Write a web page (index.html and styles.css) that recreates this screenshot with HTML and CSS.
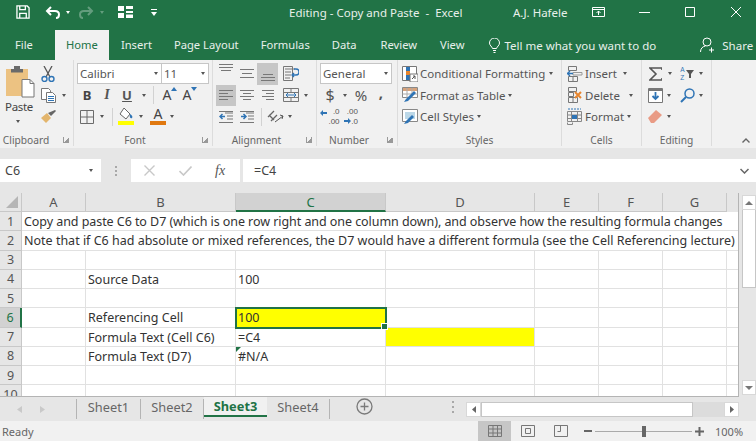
FILE: index.html
```html
<!DOCTYPE html>
<html lang="en">
<head>
  <meta charset="UTF-8" />
  <title>Editing - Copy and Paste - Excel</title>
  <link rel="stylesheet" href="styles.css">
</head>
<body>

<header class="titlebar">
  <div class="qat">
    <svg class="q-save" width="14" height="14" viewBox="0 0 15 15" fill="none" stroke="#fff" stroke-width="1.4"><path d="M1 1h11l2 2v11H1z"/><path d="M4 1v4h6V1M4 14V9h7v5"/></svg>
    <svg class="q-undo" width="15" height="13" viewBox="0 0 15 13" fill="none" stroke="#fff" stroke-width="2"><path d="M6 1 2 5l4 4M2 5h8c3 0 4 1.5 4 3.5S13 12 11 12"/></svg>
    <span class="q-car"></span>
    <svg class="q-redo" width="15" height="13" viewBox="0 0 15 13" fill="none" stroke="#fff" stroke-width="2" opacity=".3"><path d="M9 1l4 4-4 4M13 5H5C2 5 1 6.5 1 8.5S2 12 4 12"/></svg>
    <span class="q-car dim"></span>
    <svg class="q-grid" width="15" height="12" viewBox="0 0 15 12" fill="#fff"><path d="M0 0h6v5H0zM8 0h7v3H8zM0 7h6v5H0zM8 5h7v2H8zM8 8.5h7V12H8z"/></svg>
    <svg class="q-more" width="6" height="7" viewBox="0 0 6 7" fill="#fff"><path d="M0 0h6v1H0zM0 3h6L3 7z"/></svg>
  </div>
  <div class="doc-title">Editing - Copy and Paste &nbsp;-&nbsp; Excel</div>
  <div class="user">A.J. Hafele</div>
  <svg class="ribbon-mode" width="13" height="10" viewBox="0 0 13 10" fill="none" stroke="#fff"><path d="M.5.5h12v9H.5zM.5 2.500h12M6.5 8V4M4.500 6l2-2 2 2"/></svg>
  <svg class="win-min" width="11" height="1" viewBox="0 0 11 1"><path d="M0 0h11v1H0z" fill="#fff"/></svg>
  <svg class="win-max" width="10" height="10" viewBox="0 0 10 10" fill="none" stroke="#fff"><path d="M.5.5h9v9h-9z"/></svg>
  <svg class="win-close" width="10" height="10" viewBox="0 0 10 10" fill="none" stroke="#fff"><path d="M0 0l10 10M10 0 0 10"/></svg>
</header>

<nav class="tabs">
  <span class="tab tab-file">File</span>
  <span class="tab active">Home</span>
  <span class="tab">Insert</span>
  <span class="tab">Page Layout</span>
  <span class="tab">Formulas</span>
  <span class="tab">Data</span>
  <span class="tab tab-review">Review</span>
  <span class="tab">View</span>
  <svg class="bulb" width="11" height="15" viewBox="0 0 11 15" fill="none" stroke="#fff"><path d="M3.5 10.5C3 8.5.5 7.5.5 5a5 5 0 0 1 10 0c0 2.500-2.500 3.500-3 5.500zM4 12.5h3M4.5 14.5h2"/></svg>
  <span class="tell">Tell me what you want to do</span>
  <svg class="share-ic" width="15" height="16" viewBox="0 0 15 16" fill="none" stroke="#fff"><circle cx="7" cy="5" r="4"/><path d="M.5 15c0-3.500 2-5.500 5-6M11.5 10.5v5M9 13h5"/></svg>
  <span class="share">Share</span>
</nav>

<section class="ribbon">

  <div class="group g-clip">
    <div class="clip-body">
      <div class="paste">
        <svg width="29" height="33" viewBox="0 0 29 33" class="paste-ic"><path d="M0 4h22v27H0z" fill="#ecc282"/><path d="M5 4h12v3.500H5zM8 1h6v3H8z" fill="#6a6a6a"/><path d="M16 14.500h8l4 4V32H16z" fill="#fff" stroke="#777"/><path d="M24 14.500v4h4" fill="none" stroke="#777"/></svg>
        <span class="paste-label">Paste</span>
        <span class="car"></span>
      </div>
      <div class="clip-tools">
        <div class="rrow">
          <svg width="14" height="16" viewBox="0 0 14 16" fill="none"><path d="M3 0l6 11M11 0 5 11" stroke="#555" stroke-width="1.3"/><circle cx="3.5" cy="13" r="2.5" stroke="#2f74b5" stroke-width="1.4"/><circle cx="10.5" cy="13" r="2.5" stroke="#2f74b5" stroke-width="1.4"/></svg>
        </div>
        <div class="rrow">
          <svg width="15" height="15" viewBox="0 0 15 15" fill="#fff" stroke="#777"><path d="M.5.5h7l2 2v9h-9z"/><path d="M5.5 4.500h6l3 3v7h-9z"/><path d="M7 8.500h6M7 10.500h6M7 12.500h6" stroke="#2f74b5"/></svg>
          <span class="car ml4"></span>
        </div>
        <div class="rrow">
          <svg width="15" height="13" viewBox="0 0 15 13"><path d="M0 8l6-5 4 5-5 5z" fill="#e3b56c"/><path d="M7 3l3 3 5-5-1-1z" fill="#666"/></svg>
        </div>
      </div>
    </div>
    <div class="gfoot foot-clip"><span class="gname">Clipboard</span><span class="launch"></span></div>
  </div>

  <div class="group g-font">
    <div class="rrow">
      <div class="field f-name"><span>Calibri</span><span class="car"></span></div>
      <div class="field f-size"><span>11</span><span class="car"></span></div>
    </div>
    <div class="rrow pad3">
      <span class="t fb">B</span>
      <span class="t fi">I</span>
      <span class="t fu">U</span>
      <span class="car ml3"></span>
      <span class="sep sep-a"></span>
      <span class="t fa">A<svg width="6" height="4" viewBox="0 0 6 4" class="up"><path d="M0 4l3-4 3 4z" fill="#2f74b5"/></svg></span>
      <span class="t fa">A<svg width="6" height="4" viewBox="0 0 6 4" class="up"><path d="M0 0l3 4 3-4z" fill="#2f74b5"/></svg></span>
    </div>
    <div class="rrow pad3">
      <span class="t"><svg width="14" height="14" viewBox="0 0 14 14" fill="none" stroke="#6b6b6b"><path d="M.5.5h13v13H.5zM7 .5v13M.5 7h13"/></svg></span>
      <span class="car ml1"></span>
      <span class="sep sep-b"></span>
      <span class="t col">
        <svg width="16" height="12" viewBox="0 0 16 12"><path d="M6 0l6 6-4 5-6-5z" fill="#fff" stroke="#666"/><path d="M12 6c2 1 3 3 2 4s-3 0-2-4z" fill="#2f74b5"/></svg>
        <i class="bar yellow"></i>
      </span>
      <span class="car ml1"></span>
      <span class="t col ml3"><b class="a-col">A</b><i class="bar orange"></i></span>
      <span class="car"></span>
    </div>
    <div class="gfoot"><span class="gname">Font</span><span class="launch"></span></div>
  </div>

  <div class="group g-align">
    <div class="rrow pad3">
      <span class="t"><svg width="14" height="12" viewBox="0 0 14 12" class="al-top" fill="#777"><path d="M0 0h14v1H0zM0 3h14v1H0zM2 6h10v1H2z"/></svg></span>
      <span class="t ml1"><svg width="14" height="10" viewBox="0 0 14 10" fill="#777"><path d="M0 0h14v1H0zM2 4h10v1H2zM0 8h14v1H0z"/></svg></span>
      <span class="t sel w21"><svg width="14" height="14" viewBox="0 0 14 14" class="al-bot" fill="#777"><path d="M2 6h10v1H2zM0 9h14v1H0zM0 12h14v1H0z"/></svg></span>
      <span class="t ml3"><svg width="16" height="15" viewBox="0 0 16 15" fill="none"><path d="M.5.5h9v14h-9z" stroke="#777"/><path d="M2 3h10M2 6h6M2 9h6M2 12h5" stroke="#777"/><path d="M11 3h2a2 2 0 0 1 0 6h-4M11 7 9 9l2 2" stroke="#2f74b5" stroke-width="1.3"/></svg></span>
    </div>
    <div class="rrow pad3">
      <span class="t sel"><svg width="14" height="10" viewBox="0 0 14 10" fill="#777"><path d="M0 0h14v1H0zM0 3h9v1H0zM0 6h14v1H0zM0 9h9v1H0z"/></svg></span>
      <span class="t ml1"><svg width="14" height="10" viewBox="0 0 14 10" fill="#777"><path d="M0 0h14v1H0zM3 3h8v1H3zM0 6h14v1H0zM3 9h8v1H3z"/></svg></span>
      <span class="t ml1"><svg width="12" height="10" viewBox="0 0 12 10" fill="#777"><path d="M0 0h12v1H0zM4 3h8v1H4zM0 6h12v1H0zM4 9h8v1H4z"/></svg></span>
      <span class="t ml3"><svg width="16" height="14" viewBox="0 0 16 14" fill="none"><path d="M.5.5h15v13H.5zM.5 4.500h15M.5 9.500h15M8 .5v4M8 9.500v4" stroke="#777"/><path d="M3 7h10M5 5 3 7l2 2M11 5l2 2-2 2" stroke="#2f74b5"/></svg></span>
      <span class="car ml1"></span>
    </div>
    <div class="rrow pad3">
      <span class="t"><svg width="14" height="12" viewBox="0 0 14 12" fill="none"><path d="M6 2h8M8 5h6M8 8h6M0 11.500h14M0 .5h14" stroke="#777"/><path d="M6 5.500H1M3.500 3 1 5.500 3.500 8" stroke="#2f74b5" stroke-width="1.5"/></svg></span>
      <span class="t ml1"><svg width="14" height="12" viewBox="0 0 14 12" fill="none"><path d="M6 2h8M8 5h6M8 8h6M0 11.500h14M0 .5h14" stroke="#777"/><path d="M1 5.500h5M3.500 3 6 5.500 3.500 8" stroke="#2f74b5" stroke-width="1.5"/></svg></span>
      <span class="sep sep-c"></span>
      <span class="t"><svg width="18" height="15" viewBox="0 0 18 15" fill="none"><path d="M1 8l6-6M4 12l6-6M2 6l5 5" stroke="#666" stroke-width="1.3"/><path d="M8 13l8-6M13 6l3 1-1 3" stroke="#555"/></svg></span>
      <span class="car"></span>
    </div>
    <div class="gfoot"><span class="gname">Alignment</span><span class="launch"></span></div>
  </div>

  <div class="group g-num">
    <div class="rrow">
      <div class="field f-fmt"><span>General</span><span class="car"></span></div>
    </div>
    <div class="rrow pad3">
      <span class="t sym dollar">$</span>
      <span class="car ml1"></span>
      <span class="t sym ml2">%</span>
      <span class="t sym comma">,</span>
    </div>
    <div class="rrow pad3">
      <span class="t dec"><svg width="7" height="6" viewBox="0 0 7 6" class="dec-arrow"><path d="M3 0v2h4v2H3v2L0 3z" fill="#2f74b5"/></svg><span>.0<br>.00</span></span>
      <span class="t dec ml1"><span>.00<br><svg width="7" height="6" viewBox="0 0 7 6"><path d="M4 0v2H0v2h4v2l3-3z" fill="#2f74b5"/></svg>.0</span></span>
    </div>
    <div class="gfoot"><span class="gname">Number</span><span class="launch"></span></div>
  </div>

  <div class="group g-styles">
    <div class="rrow pad4">
      <svg class="lic" width="16" height="16" viewBox="0 0 16 16"><path d="M.5.5h14v14H.5z" fill="#fff" stroke="#777"/><path d="M4 1h4v4H4z" fill="#2f74b5"/><path d="M4 5h4v4H4z" fill="#e8862e"/><path d="M4 9h4v5H4z" fill="#2f74b5"/><path d="M8 8h8v8H8z" fill="#fff" stroke="#777"/><path d="M10 13l3-3M13 13v-3h-2" stroke="#555" fill="none"/></svg>
      <span class="lbl">Conditional Formatting</span><span class="car ml2"></span>
    </div>
    <div class="rrow pad4">
      <svg class="lic" width="16" height="16" viewBox="0 0 16 16"><path d="M.5.5h15v10H.5z" fill="#fff" stroke="#888"/><path d="M1 1h14v3H1z" fill="#d8a27a"/><path d="M.5 7h15M5 1v10M10 1v10" stroke="#aaa"/><path d="M2 15l4-1 8-8-2-2-8 8z" fill="#2f74b5"/></svg>
      <span class="lbl">Format as Table</span><span class="car ml1"></span>
    </div>
    <div class="rrow pad4">
      <svg class="lic" width="16" height="16" viewBox="0 0 16 16"><path d="M.5.5h15v12H.5z" fill="#fff" stroke="#888"/><path d="M3 3h10v7H3z" fill="#bcd8e8"/><path d="M2 15l4-1 6-6-2-2-6 6z" fill="#2f74b5"/></svg>
      <span class="lbl">Cell Styles</span><span class="car ml1"></span>
    </div>
    <div class="gfoot"><span class="gname">Styles</span></div>
  </div>

  <div class="group g-cells">
    <div class="rrow pad5">
      <svg class="lic" width="16" height="16" viewBox="0 0 16 16" fill="none"><path d="M1.5.5h8v4h-8zM1.5 10.500h9v5h-9zM6 10.500v5" stroke="#777"/><path d="M6 6.500h9v2.500H6z" stroke="#999"/><path d="M0 7.500h6M3 5 .5 7.500 3 10" stroke="#2f74b5" stroke-width="1.3"/></svg>
      <span class="lbl">Insert</span><span class="car m-ins"></span>
    </div>
    <div class="rrow pad5">
      <svg class="lic" width="16" height="16" viewBox="0 0 16 16" fill="none"><path d="M1.5.5h8v4h-8zM1.5 5.500h5v4h-5zM1.5 10.500h9v5h-9zM6 10.500v5" stroke="#777"/><path d="M8 5l6 6M14 5l-6 6" stroke="#e8862e" stroke-width="2"/></svg>
      <span class="lbl">Delete</span><span class="car m-del"></span>
    </div>
    <div class="rrow pad5">
      <svg class="lic" width="16" height="17" viewBox="0 0 16 17" fill="none"><path d="M.5 3.500h14v10H.5zM4.500 3.500v10M10.500 3.500v10M.5 7h14M.5 10.500h14" stroke="#888"/><path d="M5 7h5v4H5z" fill="#2f74b5"/><path d="M1 1h13" stroke="#2f74b5" stroke-dasharray="2 1"/><path d="M.5 14.500v2h5v-2" stroke="#888"/></svg>
      <span class="lbl">Format</span><span class="car ml1"></span>
    </div>
    <div class="gfoot"><span class="gname">Cells</span></div>
  </div>

  <div class="group g-edit">
    <div class="rrow pad3">
      <span class="t"><svg width="13" height="14" viewBox="0 0 13 14" fill="none"><path d="M13 3V1H1l6 6-6 6h12v-2" stroke="#555" stroke-width="1.6"/></svg></span>
      <span class="car ml1"></span>
      <span class="t ml3 sortic"><span class="az">A<br>Z</span><svg width="8" height="8" viewBox="0 0 8 8"><path d="M0 0h8L5 4v4H3V4z" fill="#555"/></svg></span>
      <span class="car"></span>
    </div>
    <div class="rrow pad3">
      <span class="t"><svg width="15" height="15" viewBox="0 0 15 15" fill="none"><path d="M.5.5h14v14H.5z" fill="#fff" stroke="#777"/><path d="M1 2h13" stroke="#777" stroke-width="2"/><path d="M7.5 4v6M4.500 8l3 3 3-3" stroke="#2f74b5" stroke-width="1.8"/></svg></span>
      <span class="car"></span>
      <span class="t ml4"><svg width="15" height="15" viewBox="0 0 15 15" fill="none"><circle cx="9.500" cy="5.500" r="4.500" stroke="#2f74b5" stroke-width="1.5"/><path d="M6 9l-5 5" stroke="#2f74b5" stroke-width="2"/></svg></span>
      <span class="car"></span>
    </div>
    <div class="rrow pad3">
      <span class="t"><svg width="15" height="13" viewBox="0 0 15 13"><path d="M0 8l8-8 6 5-8 8H3z" fill="#e99b85"/></svg></span>
      <span class="car"></span>
    </div>
    <div class="gfoot"><span class="gname">Editing</span></div>
  </div>

  <div class="collapse">
    <svg width="8" height="5" viewBox="0 0 8 5" fill="none" stroke="#666" stroke-width="1.4"><path d="M.5 4.500 4 1l3.500 3.500"/></svg>
  </div>
</section>

<section class="fbar">
  <div class="namebox"><span>C6</span><span class="car"></span></div>
  <div class="grip"><i></i><i></i><i></i></div>
  <div class="fbtns">
    <svg width="11" height="11" viewBox="0 0 11 11" fill="none" stroke="#c8c8c8" stroke-width="1.4"><path d="M.5.5l10 10M10.5.5l-10 10"/></svg>
    <svg width="13" height="10" viewBox="0 0 13 10" fill="none" stroke="#c8c8c8" stroke-width="1.6"><path d="M.5 5l4 4 8-8.500"/></svg>
    <span class="fx">fx</span>
  </div>
  <div class="finput"><span>=C4</span>
    <svg width="9" height="6" viewBox="0 0 9 6" fill="none" stroke="#666" stroke-width="1.5"><path d="M.5 1 4.500 5l4-4"/></svg>
  </div>
</section>

<section class="work">
  <div class="grid">
    <div class="hd corner"><svg width="12" height="12" viewBox="0 0 12 12"><path d="M12 0v12H0z" fill="#b5b5b5"/></svg></div>
    <div class="hd">A</div><div class="hd">B</div><div class="hd hd-sel">C</div><div class="hd">D</div><div class="hd">E</div><div class="hd">F</div><div class="hd">G</div><div class="hd-none"></div>

    <div class="rh">1</div><div class="c span-all tight">Copy and paste C6 to D7 (which is one row right and one column down), and observe how the resulting formula changes</div>
    <div class="rh">2</div><div class="c span-all">Note that if C6 had absolute or mixed references, the D7 would have a different formula (see the Cell Referencing lecture)</div>
    <div class="rh">3</div><div class="c"></div><div class="c"></div><div class="c"></div><div class="c"></div><div class="c"></div><div class="c"></div><div class="c"></div><div class="c"></div>
    <div class="rh">4</div><div class="c"></div><div class="c">Source Data</div><div class="c">100</div><div class="c"></div><div class="c"></div><div class="c"></div><div class="c"></div><div class="c"></div>
    <div class="rh">5</div><div class="c"></div><div class="c"></div><div class="c"></div><div class="c"></div><div class="c"></div><div class="c"></div><div class="c"></div><div class="c"></div>
    <div class="rh rh-sel">6</div><div class="c"></div><div class="c">Referencing Cell</div><div class="c active-cell">100</div><div class="c"></div><div class="c"></div><div class="c"></div><div class="c"></div><div class="c"></div>
    <div class="rh">7</div><div class="c"></div><div class="c">Formula Text (Cell C6)</div><div class="c">=C4</div><div class="c fill-yellow"></div><div class="c"></div><div class="c"></div><div class="c"></div><div class="c"></div>
    <div class="rh">8</div><div class="c"></div><div class="c">Formula Text (D7)</div><div class="c has-flag">#N/A</div><div class="c"></div><div class="c"></div><div class="c"></div><div class="c"></div><div class="c"></div>
    <div class="rh">9</div><div class="c"></div><div class="c"></div><div class="c"></div><div class="c"></div><div class="c"></div><div class="c"></div><div class="c"></div><div class="c"></div>
    <div class="rh">10</div><div class="c"></div><div class="c"></div><div class="c"></div><div class="c"></div><div class="c"></div><div class="c"></div><div class="c"></div><div class="c"></div>
  </div>
  <div class="vscroll">
    <div class="sb-btn"><svg width="8" height="4" viewBox="0 0 8 4"><path d="M0 4l4-4 4 4z" fill="#777"/></svg></div>
    <div class="vthumb"></div>
    <div class="sb-btn sb-down"><svg width="8" height="4" viewBox="0 0 8 4"><path d="M0 0l4 4 4-4z" fill="#777"/></svg></div>
  </div>
</section>

<section class="sheetbar">
  <div class="nav-arrows">
    <svg width="5" height="7" viewBox="0 0 5 7"><path d="M5 0v7L0 3.500z" fill="#c9c9c9"/></svg>
    <svg width="5" height="7" viewBox="0 0 5 7"><path d="M0 0v7l5-3.500z" fill="#c9c9c9"/></svg>
  </div>
  <span class="stab stab-1">Sheet1</span>
  <span class="stab">Sheet2</span>
  <span class="stab stab-on">Sheet3</span>
  <span class="stab">Sheet4</span>
  <svg class="addsheet" width="17" height="17" viewBox="0 0 17 17" fill="none" stroke="#7a7a7a" stroke-width="1.3"><circle cx="8.500" cy="8.500" r="7.500"/><path d="M8.500 4.500v8M4.500 8.500h8"/></svg>
  <div class="hgrip"><i></i><i></i><i></i></div>
  <div class="hscroll">
    <div class="hbtn"><svg width="4" height="7" viewBox="0 0 4 7"><path d="M4 0v7L0 3.500z" fill="#666"/></svg></div>
    <div class="hthumb"></div>
    <div class="htrack"></div>
    <div class="hbtn"><svg width="4" height="7" viewBox="0 0 4 7"><path d="M0 0v7l4-3.500z" fill="#666"/></svg></div>
  </div>
</section>

<footer class="status">
  <span class="ready">Ready</span>
  <div class="views">
    <div class="view view-on"><svg width="14" height="12" viewBox="0 0 14 12" fill="none" stroke="#777"><path d="M.5.5h13v11H.5zM.5 4h13M.5 8h13M5 .5v11M9.500.5v11"/></svg></div>
    <div class="view"><svg width="14" height="12" viewBox="0 0 14 12" fill="none" stroke="#777"><path d="M.5.5h13v11H.5zM4.500 3.500h5v5h-5z"/></svg></div>
    <div class="view"><svg width="14" height="12" viewBox="0 0 14 12" fill="none" stroke="#777"><path d="M.5.5h13v11H.5zM6.500.5v6h-3"/></svg></div>
  </div>
  <div class="zoom">
    <svg width="8" height="2" viewBox="0 0 8 2"><path d="M0 0h8v2H0z" fill="#666"/></svg>
    <div class="zline"><i></i></div>
    <svg width="9" height="9" viewBox="0 0 9 9"><path d="M3.500 0h2v3.500H9v2H5.500V9h-2V5.500H0v-2h3.500z" fill="#666"/></svg>
  </div>
  <span class="zoompct">100%</span>
</footer>

</body>
</html>
```

FILE: styles.css
```css
* {
  box-sizing: border-box;
}
html, body {
  margin: 0;
  height: 100%;
}
body {
  width: 756px;
  height: 441px;
  overflow: hidden;
  display: flex;
  flex-direction: column;
  background: #e6e6e6;
  font-family: "Noto Sans", "Open Sans", sans-serif;
  font-size: 11.5px;
  color: #444;
}
svg {
  display: block;
  flex: none;
}

/* title bar */
.titlebar {
  height: 30px;
  flex: none;
  padding-bottom: 6px;
  background: #217346;
  color: #e8f0eb;
  display: flex;
  align-items: center;
}
.qat {
  width: 289px;
  display: flex;
  align-items: center;
  padding-left: 16px;
}
.q-undo { margin-left: 15px; }
.q-car {
  width: 0;
  height: 0;
  margin-left: 6px;
  border-top: 3px solid #fff;
  border-left: 2.5px solid transparent;
  border-right: 2.5px solid transparent;
}
.q-car.dim { opacity: .3; }
.q-redo { margin-left: 9px; }
.q-grid { margin-left: 14px; }
.q-more { margin-left: 18px; }
.doc-title { width: 224px; white-space: nowrap; }
.user { width: 79px; white-space: nowrap; }
.win-min { margin-left: 34px; }
.win-max { margin-left: 35px; }
.win-close { margin-left: 36px; }

/* tabs */
.tabs {
  height: 30px;
  flex: none;
  background: #217346;
  color: #e8f0eb;
  display: flex;
  align-items: center;
  padding-left: 4px;
  font-size: 11.2px;
}
.tab {
  height: 30px;
  line-height: 30px;
  padding: 0 11px;
  white-space: nowrap;
}
.tab.active {
  background: #f1f1f1;
  color: #217346;
  width: 54px;
  padding: 0;
  text-align: center;
  margin-right: 1px;
}
.tab-file { margin-right: 11px; }
.tab-review { margin-left: 2px; margin-right: 1px; }
.bulb { margin-left: 13px; }
.tell { margin-left: 5px; white-space: nowrap; font-size: 11.5px; }
.share-ic { margin-left: 44px; }
.share { margin-left: 7px; font-size: 11.5px; }

/* ribbon */
.ribbon {
  height: 88px;
  flex: none;
  background: #f1f1f1;
  display: flex;
  color: #444;
}
.group {
  padding-top: 3px;
  border-right: 1px solid #dcdcdc;
  display: flex;
  flex-direction: column;
  height: 86px;
}
.g-clip { width: 74px; }
.g-font { width: 139px; }
.g-align { width: 104px; }
.g-num { width: 81px; }
.g-styles { width: 164px; }
.g-cells { width: 80px; }
.g-edit { width: 70px; }
.collapse {
  flex: 1;
  display: flex;
  justify-content: flex-end;
  align-items: flex-end;
  padding: 0 6px 5px 0;
}
.rrow {
  height: 21.5px;
  display: flex;
  align-items: center;
  white-space: nowrap;
}
.pad3 { padding-left: 3px; }
.pad4 { padding-left: 4px; }
.pad5 { padding-left: 5px; }
.gfoot {
  margin-top: auto;
  height: 16px;
  margin-bottom: -2px;
  display: flex;
  align-items: center;
  color: #666;
  font-size: 10.2px;
}
.gname {
  flex: 1;
  text-align: center;
}
.foot-clip .gname {
  flex: none;
  width: 58px;
  padding-right: 6px;
}
.foot-clip .launch { margin-left: 5px; }
.launch {
  flex: none;
  width: 6px;
  height: 6px;
  margin: 0 4px 0 6px;
  border-left: 1px solid #999;
  border-bottom: 1px solid #999;
  background: linear-gradient(135deg, transparent 50%, #999 50%);
}
.car {
  flex: none;
  width: 8px;
  display: flex;
  justify-content: center;
}
.car::before {
  content: "";
  border-top: 3px solid #555;
  border-left: 2.5px solid transparent;
  border-right: 2.5px solid transparent;
}
.ml1 { margin-left: 1px; }
.ml2 { margin-left: 2px; }
.ml3 { margin-left: 3px; }
.ml4 { margin-left: 4px; }
.m-ins { margin-left: 4px; }
.m-del { margin-left: 7px; }

/* clipboard */
.clip-body {
  display: flex;
  height: 64.5px;
}
.paste {
  width: 40px;
  display: flex;
  flex-direction: column;
  align-items: flex-start;
  padding-left: 6px;
}
.paste-ic { margin-top: 2px; }
.paste-label {
  margin-left: -1px;
  line-height: 17px;
  font-size: 11.5px;
  letter-spacing: -.3px;
}
.paste .car { margin: 5px 0 0 8px; }
.clip-tools { padding-left: 1px; }

/* font group */
.field {
  height: 21px;
  background: #fff;
  border: 1px solid #c6c6c6;
  display: flex;
  align-items: center;
  justify-content: space-between;
  padding: 0 1px 0 2px;
  color: #555;
}
.f-name { width: 84px; margin-left: 3px; border-right: 0; }
.f-size { width: 48px; }
.f-fmt { width: 72px; margin-left: 3px; }
.t {
  flex: none;
  width: 20px;
  height: 21.5px;
  display: flex;
  align-items: center;
  justify-content: center;
}
.w21 { width: 21px; }
.sel { background: #c6c6c6; }
.fb { font-weight: bold; font-size: 13px; color: #444; }
.fi { font-style: italic; font-size: 14px; font-family: "Liberation Serif", serif; font-weight: bold; color: #555; }
.fu { text-decoration: underline; font-size: 13px; font-weight: bold; color: #555; }
.fa { font-size: 14px; align-items: flex-end; padding-bottom: 2px; }
.fa .up { margin: 0 -4px 13px 0; }
.sep {
  width: 1px;
  height: 18px;
  background: #d2d2d2;
}
.sep-a { margin: 0 4px 0 5px; }
.sep-b { margin: 0 3px 0 6px; }
.sep-c { margin: 0 4px 0 4px; }
.col { flex-direction: column; gap: 1px; }
.bar { display: block; width: 16px; height: 4px; }
.yellow { background: #ffff00; }
.orange { background: #e0780f; }
.a-col { font-size: 14px; line-height: 12px; font-weight: normal; color: #444; }

.al-top { margin-top: -8px; }
.al-bot { margin-top: 2px; }

/* number */
.sym { font-size: 15px; color: #555; }
.dollar { font-size: 16px; }
.comma { font-weight: bold; padding-bottom: 6px; }
.dec {
  font-family: "Liberation Sans", sans-serif;
  font-size: 8px;
  line-height: 9.5px;
  color: #555;
  gap: 1px;
}
.dec span { text-align: right; }
.dec-arrow { margin-bottom: 7px; }
.dec svg { display: inline-block; }

/* styles, cells, editing */
.lbl { margin-left: 2px; color: #555; }
.sortic { gap: 1px; }
.az {
  font-family: "Liberation Sans", sans-serif;
  font-size: 6.5px;
  line-height: 7.5px;
  color: #2f74b5;
}

/* formula bar */
.fbar {
  height: 45px;
  flex: none;
  background: #e6e6e6;
  display: flex;
  padding-top: 11px;
  align-items: flex-start;
}
.namebox, .fbtns, .finput {
  height: 23px;
  background: #fff;
  display: flex;
  align-items: center;
  color: #444;
  font-size: 12.5px;
}
.namebox {
  width: 101px;
  justify-content: space-between;
  padding: 0 6px 0 5px;
}
.grip {
  width: 30px;
  height: 23px;
  display: flex;
  flex-direction: column;
  align-items: center;
  justify-content: center;
  gap: 2px;
}
.grip i, .hgrip i {
  width: 2px;
  height: 2px;
  background: #a8a8a8;
}
.fbtns {
  width: 109px;
  padding-left: 13px;
  gap: 24px;
}
.fx {
  margin-left: -1px;
  font-family: "Liberation Serif", serif;
  font-style: italic;
  font-size: 14px;
  color: #555;
}
.finput {
  margin-left: 3px;
  flex: 1;
  justify-content: space-between;
  padding: 0 7px 0 11px;
}

/* worksheet */
.work {
  height: 204px;
  flex: none;
  display: flex;
}
.grid {
  width: 739px;
  height: 204px;
  overflow: hidden;
  display: grid;
  grid-template-columns: 22px 64px 150px 150px 149px 64px 64px 64px 12px;
  grid-template-rows: 19px;
  grid-auto-rows: 19.25px;
  border-right: 1px solid #b4b4b4;
  border-bottom: 1px solid #b4b4b4;
  font-size: 12.5px;
  color: #333;
}
.hd, .rh {
  background: #e6e6e6;
  display: flex;
  align-items: center;
  justify-content: center;
  color: #555;
  border-right: 1px solid #c8c8c8;
  border-bottom: 1px solid #c8c8c8;
}
.hd { font-size: 13px; }
.corner {
  justify-content: flex-end;
  padding-right: 3px;
}
.hd-sel {
  background: #d2d2d2;
  color: #217346;
  border-bottom: 2px solid #217346;
}
.rh-sel {
  background: #d2d2d2;
  color: #217346;
  border-right: 2px solid #217346;
}
.c {
  background: #fff;
  border-right: 1px solid #e1e1e1;
  border-bottom: 1px solid #e1e1e1;
  padding: 1px 0 0 2px;
  display: flex;
  align-items: center;
  white-space: nowrap;
  position: relative;
}
.span-all { grid-column: 2 / -1; }
.tight { letter-spacing: -.06px; }
.fill-yellow { background: #ffff00; }
.active-cell {
  background: #ffff00;
  outline: 2px solid #217346;
  outline-offset: -1px;
  z-index: 1;
}
.active-cell::after {
  content: "";
  position: absolute;
  right: -3px;
  bottom: -3px;
  width: 5px;
  height: 5px;
  background: #217346;
  border: 1px solid #fff;
}
.has-flag::before {
  content: "";
  position: absolute;
  left: 0;
  top: 0;
  border-top: 5px solid #217346;
  border-right: 5px solid transparent;
}
.vscroll {
  flex: 1;
  padding: 2px 0 0 3px;
  display: flex;
  flex-direction: column;
  background: #e6e6e6;
}
.sb-btn {
  height: 15px;
  flex: none;
  background: #fff;
  border: 1px solid #d8d8d8;
  display: flex;
  align-items: center;
  justify-content: center;
}
.vthumb {
  flex: 1;
  margin-bottom: 92px;
  background: #fff;
  border: 1px solid #c6c6c6;
  border-top: 0;
}
.sb-down { margin-bottom: 2px; }

/* sheet tabs */
.sheetbar {
  height: 24px;
  flex: none;
  background: #e6e6e6;
  display: flex;
  align-items: flex-start;
  font-size: 12.8px;
  color: #666;
}
.nav-arrows {
  width: 77px;
  height: 20px;
  padding-left: 17px;
  display: flex;
  align-items: center;
  gap: 18px;
  border-right: 1px solid #b4b4b4;
  margin-top: 2px;
}
.stab {
  height: 20px;
  line-height: 16px;
  margin-top: 2px;
  width: 63px;
  border-right: 1px solid #b4b4b4;
  text-align: center;
  white-space: nowrap;
}
.stab-1 { width: 64px; }
.stab-on {
  margin-top: 0;
  line-height: 18px;
  font-weight: bold;
  color: #217346;
  background: #f1f1f1;
  border-right: 0;
  border-bottom: 2px solid #217346;
}
.addsheet { margin: 1px 0 0 26px; }
.hgrip {
  margin: 4px 0 0 79px;
  display: flex;
  flex-direction: column;
  gap: 3px;
}
.hscroll {
  margin: 5px 0 0 12px;
  width: 273px;
  height: 15px;
  display: flex;
}
.hbtn {
  width: 15px;
  background: #fff;
  border: 1px solid #d8d8d8;
  display: flex;
  align-items: center;
  justify-content: center;
}
.hthumb {
  width: 212px;
  background: #fff;
  border: 1px solid #c6c6c6;
}
.htrack {
  flex: 1;
  background: #dcdcdc;
}

/* status bar */
.status {
  height: 20px;
  flex: none;
  background: #f1f1f1;
  display: flex;
  align-items: center;
  color: #666;
  font-size: 11px;
}
.ready { margin-left: 2px; width: 476px; }
.views {
  display: flex;
  height: 20px;
}
.view {
  width: 33px;
  display: flex;
  align-items: center;
  justify-content: center;
}
.view-on { background: #c6c6c6; }
.zoom {
  margin-left: 7px;
  width: 120px;
  display: flex;
  align-items: center;
  gap: 3px;
}
.zline {
  width: 100px;
  height: 1px;
  background: #aaa;
  display: flex;
  justify-content: center;
  align-items: center;
}
.zline i {
  width: 4px;
  height: 11px;
  background: #666;
}
.zoompct { margin-left: 11px; }
```
